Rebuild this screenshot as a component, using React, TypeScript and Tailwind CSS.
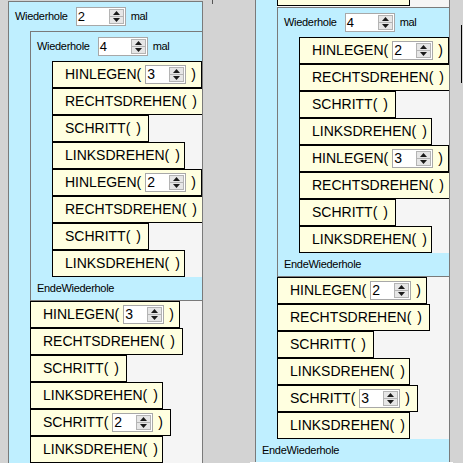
import type { ReactNode } from 'react'

type CmdItem = { name: string; value?: string; w: string }

function Spin({ value, wide }: { value: string; wide?: boolean }) {
  return (
    <div className={`flex h-[19px] shrink-0 border border-[#a8a8a8] bg-white ${wide ? 'w-[50px]' : 'w-[41px]'}`}>
      <span className={`flex-1 pl-[1px] leading-[17px] text-black ${wide ? 'text-[13px]' : 'text-[14px]'}`}>{value}</span>
      <div className="my-[1px] mr-[1px] flex w-[15px] flex-col border border-[#b4b4b4] bg-[#e6e6e6]">
        <div className="flex flex-1 items-center justify-center border-b border-[#b4b4b4]">
          <svg width="7" height="4" viewBox="0 0 7 4">
            <path d="M3.5 0L7 4H0z" fill="#1a1a1a" />
          </svg>
        </div>
        <div className="flex flex-1 items-center justify-center">
          <svg width="7" height="4" viewBox="0 0 7 4">
            <path d="M0 0h7L3.5 4z" fill="#1a1a1a" />
          </svg>
        </div>
      </div>
    </div>
  )
}

function Cmd({ name, value, w, className = '' }: CmdItem & { className?: string }) {
  return (
    <div className={`flex h-[27px] shrink-0 items-center border border-black bg-[#ffffe0] pl-3 text-[14px] text-black ${w} ${className}`}>
      <span className="whitespace-nowrap">{name}(</span>
      {value ? (
        <>
          <div className="ml-[4px]">
            <Spin value={value} />
          </div>
          <span className="ml-[5px]">)</span>
        </>
      ) : (
        <span className="ml-[6px]">)</span>
      )}
    </div>
  )
}

function Header({ count }: { count: string }) {
  return (
    <div className="flex h-[29px] shrink-0 items-center pl-[6px] text-[11px] tracking-[-0.3px] text-black">
      <span>Wiederhole</span>
      <div className="ml-[8px]">
        <Spin value={count} wide />
      </div>
      <span className="ml-[5px]">mal</span>
    </div>
  )
}

function Footer() {
  return (
    <div className="flex h-[23px] shrink-0 items-center pl-[6px] text-[11px] tracking-[-0.3px] text-black">
      EndeWiederhole
    </div>
  )
}

function Body({ children }: { children: ReactNode }) {
  return (
    <div className="flex min-h-0 flex-1">
      <div className="w-[21px] shrink-0" />
      <div className="flex min-w-0 flex-1 flex-col items-start overflow-hidden bg-[#f5f5f5]">{children}</div>
    </div>
  )
}

const innerA: CmdItem[] = [
  { name: 'HINLEGEN', value: '3', w: 'w-[150px]' },
  { name: 'RECHTSDREHEN', w: 'w-[153px]' },
  { name: 'SCHRITT', w: 'w-[97px]' },
  { name: 'LINKSDREHEN', w: 'w-[133px]' },
  { name: 'HINLEGEN', value: '2', w: 'w-[150px]' },
  { name: 'RECHTSDREHEN', w: 'w-[153px]' },
  { name: 'SCHRITT', w: 'w-[97px]' },
  { name: 'LINKSDREHEN', w: 'w-[133px]' },
]

const afterA: CmdItem[] = [
  { name: 'HINLEGEN', value: '3', w: 'w-[150px]' },
  { name: 'RECHTSDREHEN', w: 'w-[153px]' },
  { name: 'SCHRITT', w: 'w-[97px]' },
  { name: 'LINKSDREHEN', w: 'w-[133px]' },
  { name: 'SCHRITT', value: '2', w: 'w-[141px]' },
  { name: 'LINKSDREHEN', w: 'w-[133px]' },
]

const innerB: CmdItem[] = [
  { name: 'HINLEGEN', value: '2', w: 'w-[150px]' },
  { name: 'RECHTSDREHEN', w: 'w-[153px]' },
  { name: 'SCHRITT', w: 'w-[97px]' },
  { name: 'LINKSDREHEN', w: 'w-[133px]' },
  { name: 'HINLEGEN', value: '3', w: 'w-[150px]' },
  { name: 'RECHTSDREHEN', w: 'w-[153px]' },
  { name: 'SCHRITT', w: 'w-[97px]' },
  { name: 'LINKSDREHEN', w: 'w-[133px]' },
]

const afterB: CmdItem[] = [
  { name: 'HINLEGEN', value: '2', w: 'w-[150px]' },
  { name: 'RECHTSDREHEN', w: 'w-[153px]' },
  { name: 'SCHRITT', w: 'w-[97px]' },
  { name: 'LINKSDREHEN', w: 'w-[133px]' },
  { name: 'SCHRITT', value: '3', w: 'w-[141px]' },
  { name: 'LINKSDREHEN', w: 'w-[133px]' },
]

function InnerLoop({ items, className = '' }: { items: CmdItem[]; className?: string }) {
  return (
    <div className={`flex w-[210px] shrink-0 flex-col border border-[#7a7a7a] bg-[#bfefff] ${className}`}>
      <Header count="4" />
      <Body>
        {items.map((c, i) => (
          <Cmd key={i} {...c} />
        ))}
      </Body>
      <Footer />
    </div>
  )
}

export default function App() {
  return (
    <div className="flex h-[463px] w-[463px] overflow-hidden bg-[#d3d3d3] pl-[8px] font-['Liberation_Sans',Arial,sans-serif]">
      {/* left editor, top of the program */}
      <div className="mt-[1px] flex w-[195px] shrink-0 flex-col self-start border border-[#7a7a7a] bg-[#bfefff]">
        <Header count="2" />
        <Body>
          <InnerLoop items={innerA} />
          {afterA.map((c, i) => (
            <Cmd key={i} {...c} />
          ))}
        </Body>
        <Footer />
      </div>

      <div className="w-[52px] shrink-0 pl-[9px]">
        <div className="h-[4px] w-[1px] bg-[#555]" />
      </div>

      {/* right editor, scrolled down */}
      <div className="flex w-[195px] shrink-0 flex-col">
        <div className="flex h-[462px] flex-col overflow-hidden border-x border-[#7a7a7a] bg-[#bfefff]">
          <Body>
            <Cmd name="LINKSDREHEN" w="w-[133px]" className="-mt-[21px]" />
            <InnerLoop items={innerB} className="mt-[1px]" />
            {afterB.map((c, i) => (
              <Cmd key={i} {...c} />
            ))}
          </Body>
          <Footer />
        </div>
        <div className="-ml-[5px] h-[1px] w-[203px] bg-white" />
      </div>

      <div className="w-[13px] shrink-0 pl-[11px] pt-[25px]">
        <div className="h-[58px] w-[1px] bg-black" />
      </div>
    </div>
  )
}
